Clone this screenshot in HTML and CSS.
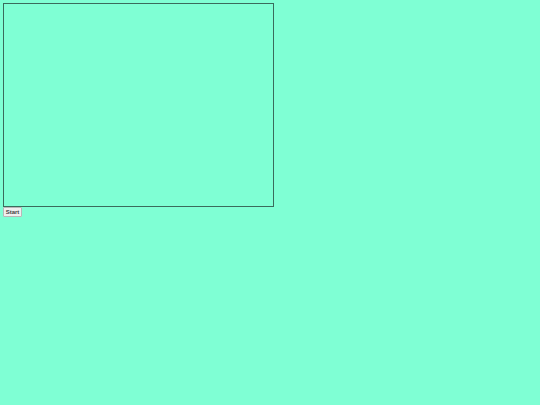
FILE: index.html
```html
<!DOCTYPE html>
<html>
<head>
<meta charset="utf-8">
<link rel="stylesheet" href="styles.css">
</head>
<body>
<div class="stage"></div>
<div class="controls"><button class="start">Start</button></div>
</body>
</html>
```
FILE: styles.css
```css
html, body { margin: 0; padding: 0; background: #7fffd4; }
body { padding: 3px; }
.stage {
  width: 269px;
  height: 202px;
  border: 1px solid #3a6b5c;
}
.controls { margin-top: 0; display: flex; }
.start {
  font-family: "Liberation Sans", Arial, sans-serif;
  font-size: 6px;
  font-weight: bold;
  line-height: 7px;
  width: 19px;
  height: 10px;
  padding: 0;
  background: #efefef;
  color: #444;
  border: 1px solid #b8b8b8;
  border-radius: 1px;
}
```
